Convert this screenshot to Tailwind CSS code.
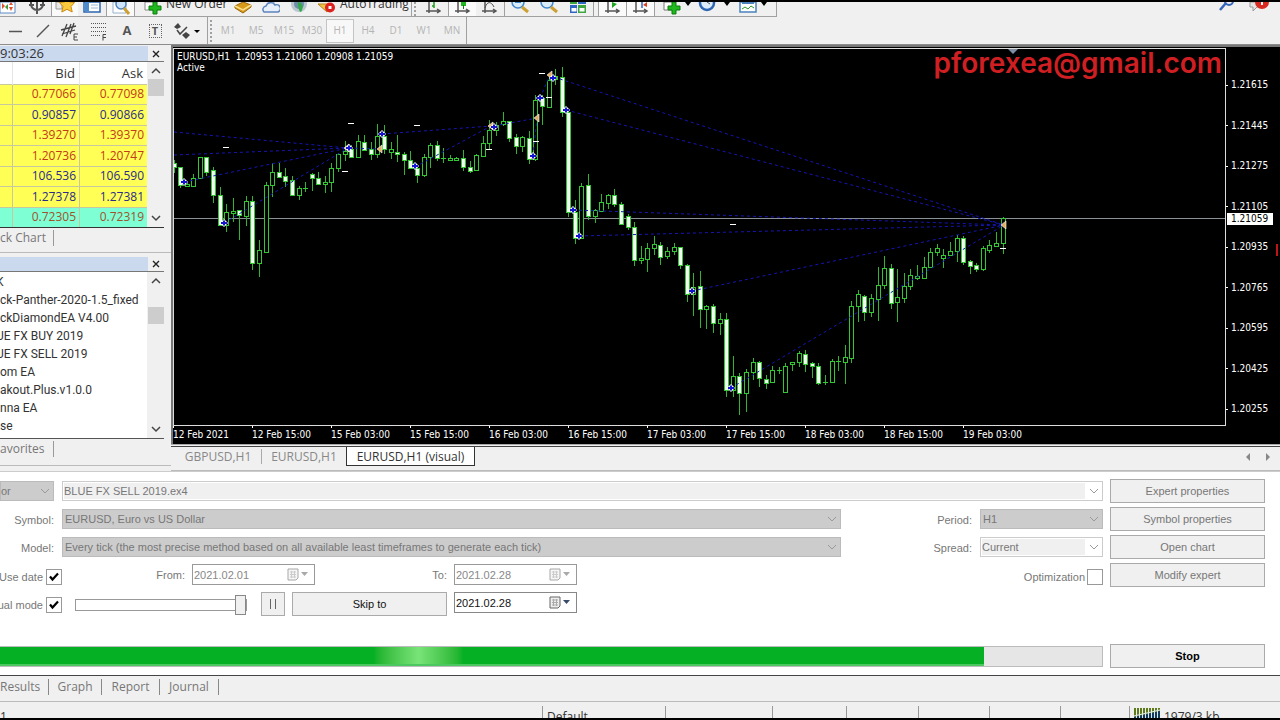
<!DOCTYPE html>
<html lang="en">

<head>
    <meta charset="UTF-8" />
    <title>EURUSD,H1 (visual)</title>
    <meta name="viewport" content="width=device-width, initial-scale=1.0" />
    <script src="https://cdn.jsdelivr.net/npm/@tailwindcss/browser@4"></script>
</head>

<body class="min-h-screen flex flex-col bg-[#f0f0f0] border-y-2 border-black font-['Open_Sans','Noto_Sans',sans-serif] text-xs text-[#333] overflow-x-hidden">

    <!-- Standard toolbar -->
    <div class="flex justify-between h-[15px] overflow-hidden">
        <div class="flex items-center h-[15px] border-b border-r border-[#a0a0a0]">
            <span class="w-[22px]">
                <svg width="16" height="15" viewBox="0 0 16 15"><path d="M0 0h15v11H0z" fill="#fff" stroke="#5b8ac4" /><path d="M2 1l3 3-3 3zM9 3h4l-2-3zM9 5h4l-2 4z" fill="#e4502b" /><path d="M5 5l3-3v6z" fill="#3a9d3a" /></svg>
            </span>
            <span class="w-[29px] flex justify-center">
                <svg width="18" height="15" viewBox="0 0 18 15" fill="none" stroke="#555" stroke-width="2"><path d="M3 0v2a6 6 0 0 0 12 0V0M9 0v12M1 3h5M12 3h5" /></svg>
            </span>
            <span class="w-[27px] h-full flex justify-center items-center bg-[#fafafa] border-l border-[#a0a0a0]">
                <svg width="20" height="15" viewBox="0 0 20 15"><path d="M1 0h6v7H1z" fill="#e8e8e8" stroke="#999" /><path d="M12 -5l2.500 5 5 .500-3.500 4 1.200 5.500-5.200-2.700-5.200 2.700 1.200-5.500-3.500-4 5-.500z" fill="#fbc93d" stroke="#c98a12" /></svg>
            </span>
            <span class="w-[28px] flex justify-center">
                <svg width="18" height="15" viewBox="0 0 18 15"><path d="M1 0h16v10H1z" fill="#fff" stroke="#2a66b0" stroke-width="1.500" /><path d="M2 0h4v9H2z" fill="#4b8bd0" /><path d="M8 3h7M8 6h7" stroke="#9fb9d6" /></svg>
            </span>
            <span class="w-[29px] h-full flex justify-center items-center bg-[#fafafa] border-x border-[#a0a0a0]">
                <svg width="20" height="15" viewBox="0 0 20 15"><path d="M2 0h13v11H2z" fill="#fff" stroke="#9ab0cc" /><circle cx="10" cy="2" r="5" fill="#cfe4f8" stroke="#4b82bd" stroke-width="1.500" /><path d="M13 6l5 6" stroke="#cba035" stroke-width="3" /></svg>
            </span>
            <span class="w-[31px] flex justify-end pr-1">
                <svg width="18" height="15" viewBox="0 0 18 15"><path d="M1 0h11v8H1z" fill="#fff" stroke="#888" /><path d="M9 0h4v4h4v4h-4v4H9V8H5V4h4z" fill="#1fb81f" stroke="#0d7d0d" /></svg>
            </span>
            <button class="w-[62px] text-left leading-4 -mt-[10px] whitespace-nowrap">New Order</button>
            <span class="w-[29px] flex justify-center">
                <svg width="18" height="15" viewBox="0 0 18 15"><path d="M1 4l8-4 8 3v2l-8 6-8-5z" fill="#d99a1c" stroke="#9a6508" /><path d="M1 4l8 4 8-5" fill="none" stroke="#fbe08a" stroke-width="1.500" /></svg>
            </span>
            <span class="w-[28px] flex justify-center">
                <svg width="18" height="15" viewBox="0 0 18 15"><circle cx="9" cy="0" r="3" fill="#fff" stroke="#6a93c8" /><path d="M2 10a3.500 3.500 0 0 1 2-6 5 5 0 0 1 9-1 3.500 3.500 0 0 1 3 7z" fill="#e6effa" stroke="#5b83ba" stroke-width="1.500" /></svg>
            </span>
            <span class="w-[28px] flex justify-center">
                <svg width="18" height="15" viewBox="0 0 18 15"><circle cx="9" cy="2" r="8" fill="#b9c5cf" /><circle cx="9" cy="2" r="5" fill="#6d8fa8" /><path d="M8 0c5 1 6 5 3 10-2 0-3-5-3-10z" fill="#35a94a" /></svg>
            </span>
            <span class="w-[27px] flex justify-center">
                <svg width="18" height="15" viewBox="0 0 18 15"><path d="M0 2h14l-5 8z" fill="#f3c242" stroke="#b5841a" /><circle cx="12" cy="5.500" r="5" fill="#dd2020" /><path d="M10.500 4h3v3h-3z" fill="#fff" /></svg>
            </span>
            <button class="w-[71px] text-left leading-4 -mt-[10px] whitespace-nowrap">AutoTrading</button>
            <span class="w-[7px] h-full border-l border-[#a0a0a0] flex justify-center"><i class="h-full border-l-2 border-dotted border-[#a0a0a0]"></i></span>
            <span class="w-[30px] flex justify-center">
                <svg width="16" height="15" viewBox="0 0 16 15" fill="none"><path d="M4 0v11M1 9h13M12 7l3 2-3 2" stroke="#555" stroke-width="1.500" /><path d="M9 0v6M9 4h-2" stroke="#1a9c1a" stroke-width="1.500" /></svg>
            </span>
            <span class="w-[28px] h-full flex justify-center items-center bg-[#fafafa] border-l border-[#a0a0a0]">
                <svg width="16" height="15" viewBox="0 0 16 15" fill="none"><path d="M3 0v11M0 9h13M11 7l3 2-3 2" stroke="#555" stroke-width="1.500" /><path d="M6 0h5v4H6z" fill="#1fb81f" /><path d="M8.500 3v4" stroke="#0d7d0d" /></svg>
            </span>
            <span class="w-[29px] h-full flex justify-center items-center border-r border-[#a0a0a0]">
                <svg width="16" height="15" viewBox="0 0 16 15" fill="none"><path d="M3 0v11M0 9h13M11 7l3 2-3 2" stroke="#555" stroke-width="1.500" /><path d="M3 6c2-7 6-7 9-1" stroke="#555" /></svg>
            </span>
            <span class="w-[30px] flex justify-center">
                <svg width="18" height="15" viewBox="0 0 18 15"><circle cx="7" cy="0" r="6" fill="#d8ecfb" stroke="#3f86cc" stroke-width="1.500" /><path d="M4 0h6" stroke="#3f86cc" stroke-width="2" /><path d="M11 5l6 5" stroke="#cba035" stroke-width="3" /></svg>
            </span>
            <span class="w-[28px] flex justify-center">
                <svg width="18" height="15" viewBox="0 0 18 15"><circle cx="7" cy="0" r="6" fill="#d8ecfb" stroke="#3f86cc" stroke-width="1.500" /><path d="M11 5l6 5" stroke="#cba035" stroke-width="3" /></svg>
            </span>
            <span class="w-[31px] h-full flex justify-center items-center border-r border-[#a0a0a0]">
                <svg width="18" height="15" viewBox="0 0 18 15"><path d="M1 0h7v2H1zM9 3h8v8H9z" fill="#3fa53f" /><path d="M9 0h8v2H9zM1 3h7v8H1z" fill="#2f66c4" /><path d="M2.500 6h5v3.500h-5zM10.500 6h5v3.500h-5z" fill="#fff" /></svg>
            </span>
            <span class="ml-1 w-[28px] h-full flex justify-center items-center bg-[#fafafa] border-l border-[#a0a0a0]">
                <svg width="16" height="15" viewBox="0 0 16 15" fill="none"><path d="M3 0v11M0 9h13M11 7l3 2-3 2" stroke="#555" stroke-width="1.500" /><path d="M7 0v6l5-4z" fill="#1fa51f" /></svg>
            </span>
            <span class="w-[29px] h-full flex justify-center items-center bg-[#fafafa] border-x border-[#a0a0a0]">
                <svg width="16" height="15" viewBox="0 0 16 15" fill="none"><path d="M3 0v11M0 9h13M11 7l3 2-3 2" stroke="#555" stroke-width="1.500" /><path d="M9 0v6" stroke="#2f66c4" stroke-width="1.500" /><path d="M10 3l4-3v5z" fill="#d8401f" /></svg>
            </span>
            <span class="w-[36px] flex items-start justify-end gap-1">
                <svg width="18" height="15" viewBox="0 0 18 15"><path d="M1 0h11v8H1z" fill="#fff" stroke="#777" /><path d="M9 0h4v4h4v4h-4v4H9V8H5V4h4z" fill="#1fb81f" stroke="#0d7d0d" /></svg>
                <svg width="6" height="4" viewBox="0 0 6 4"><path d="M0 0h6L3 4z" /></svg>
            </span>
            <span class="w-[39px] flex items-start justify-end gap-2">
                <svg width="18" height="15" viewBox="0 0 18 15"><circle cx="9" cy="1" r="7" fill="#dcecfb" stroke="#2f66b4" stroke-width="2.500" /><path d="M9 0l3 2" stroke="#555" /></svg>
                <svg width="6" height="4" viewBox="0 0 6 4"><path d="M0 0h6L3 4z" /></svg>
            </span>
            <span class="w-[46px] flex items-start justify-center gap-1">
                <svg width="18" height="15" viewBox="0 0 18 15"><path d="M1 0h16v10H1z" fill="#fff" stroke="#4b82bd" stroke-width="1.500" /><path d="M3 1h12" stroke="#4b82bd" stroke-width="2" /><path d="M3 7l3-2 3 2 3-3 3 2" fill="none" stroke="#2a9c2a" /></svg>
                <svg width="6" height="4" viewBox="0 0 6 4"><path d="M0 0h6L3 4z" /></svg>
            </span>
        </div>
        <div class="flex gap-3 pr-2">
            <svg width="18" height="15" viewBox="0 0 18 15"><path d="M2 8l6-7" stroke="#3465b8" stroke-width="2.500" /><circle cx="11" cy="-1" r="4" fill="none" stroke="#3465b8" stroke-width="2" /></svg>
            <svg width="24" height="15" viewBox="0 0 24 15"><path d="M2 0h13v5H9l-4 4V5H2z" fill="#e4e4e4" stroke="#999" /><circle cx="14" cy="0" r="7" fill="#d82a20" /><path d="M14 -2v5" stroke="#fff" stroke-width="2" /></svg>
        </div>
    </div>

    <!-- Line studies and periods -->
    <div class="flex h-[28px] border-b border-[#8c8c8c]">
        <div class="flex items-center border-r border-[#a0a0a0] w-[208px]">
            <svg class="ml-px" width="28" height="26" viewBox="0 0 28 26"><path d="M8 13.500h13" stroke="#555" stroke-width="1.500" /></svg>
            <svg width="28" height="26" viewBox="0 0 28 26"><path d="M8 19l12-12" stroke="#555" stroke-width="1.500" /></svg>
            <svg width="28" height="26" viewBox="0 0 28 26"><path d="M5 18l5-12M9 19l5-13M13 16l4-11M4 12l15-4M5 16l13-4" stroke="#444" stroke-width="1.300" /><path d="M21 16h-4v6h4M17 19h3" fill="none" stroke="#444" /></svg>
            <svg width="28" height="26" viewBox="0 0 28 26"><path d="M6 5.500h15M6 9.500h15M6 13.500h15M6 17.500h10" stroke="#555" stroke-dasharray="1 1" /><path d="M21 16.500h-3v6M18 19.500h3" fill="none" stroke="#444" /></svg>
            <span class="w-[28px] text-center font-bold text-[13px] text-[#555]">A</span>
            <span class="w-[28px] flex justify-center"><span class="w-[13px] h-[14px] border border-dotted border-[#666] text-center font-bold text-[11px] leading-3 text-[#555]">T</span></span>
            <svg width="36" height="26" viewBox="0 0 36 26"><path d="M5 9l4-4 3 4-4 2zM13 17l4-3 4 3-4 4z" fill="#444" /><path d="M8 12l3 4 7-7" fill="none" stroke="#444" stroke-width="1.500" /><path d="M25 12h6l-3 3z" fill="#000" /></svg>
        </div>
        <div class="flex items-center border-r border-[#a0a0a0] text-[10px] text-[#b4b4b4]">
            <i class="mx-[2px] h-[22px] border-l-2 border-dotted border-[#a0a0a0]"></i>
            <button class="w-[28px]">M1</button>
            <button class="w-[28px]">M5</button>
            <button class="w-[28px]">M15</button>
            <button class="w-[28px]">M30</button>
            <button class="w-[28px] h-6 bg-[#f8f8f8] border border-[#c4c4c4]">H1</button>
            <button class="w-[28px]">H4</button>
            <button class="w-[28px]">D1</button>
            <button class="w-[28px]">W1</button>
            <button class="w-[28px]">MN</button>
        </div>
    </div>

    <main class="flex flex-1 min-h-[421px]">

        <!-- Market watch and navigator -->
        <aside class="w-[171px] shrink-0 flex flex-col">
            <section class="pr-[7px]">
                <header class="flex items-center justify-between h-4 border-b border-[#777] mt-px">
                    <span class="flex-1 h-full bg-[#cbd9ee] text-[13px] leading-[15px]">9:03:26</span>
                    <button class="w-4 pl-1" aria-label="Close market watch"><svg width="8" height="8" viewBox="0 0 8 8"><path d="M1 1l6 6M7 1L1 7" stroke="#222" stroke-width="1.400" /></svg></button>
                </header>
                <div class="flex border-b border-[#333]">
                    <table class="flex-1 table-fixed w-full h-[165px] bg-white text-right border-collapse leading-4">
                        <thead>
                            <tr class="h-[22px] text-[13px]">
                                <th class="w-3 border-r border-[#e4e4e4]"></th>
                                <th class="font-normal pr-1 border-r border-[#e4e4e4]">Bid</th>
                                <th class="font-normal pr-1">Ask</th>
                            </tr>
                        </thead>
                        <tbody id="quotes"></tbody>
                    </table>
                    <div class="w-[17px] flex flex-col items-center bg-[#f0f0f0]">
                        <svg width="16" height="17" viewBox="0 0 16 17"><path d="M4 11l4-4 4 4" fill="none" stroke="#444" stroke-width="1.500" /></svg>
                        <span class="w-4 h-[17px] bg-[#cdcdcd]"></span>
                        <svg class="mt-auto" width="16" height="17" viewBox="0 0 16 17"><path d="M4 6l4 4 4-4" fill="none" stroke="#444" stroke-width="1.500" /></svg>
                    </div>
                </div>
                <nav class="flex items-center h-5 text-[#777]">
                    <a href="#" class="w-[54px] border-r border-[#999] leading-4 whitespace-nowrap">ck Chart</a>
                </nav>
            </section>

            <section class="flex-1 flex flex-col mt-1 mb-[5px] border-y border-[#bbb] pr-[7px]">
                <header class="flex items-center justify-between h-[15px] border-b border-[#777] mt-1">
                    <span class="flex-1 h-full bg-[#cbd9ee]"></span>
                    <button class="w-4 pl-1" aria-label="Close navigator"><svg width="8" height="8" viewBox="0 0 8 8"><path d="M1 1l6 6M7 1L1 7" stroke="#222" stroke-width="1.400" /></svg></button>
                </header>
                <div class="flex flex-1 border-b border-[#555] bg-white">
                    <ul class="flex-1 leading-[18px] pt-px overflow-hidden whitespace-nowrap font-['Roboto',sans-serif]">
                        <li class="-ml-1">K</li>
                        <li>ck-Panther-2020-1.5_fixed</li>
                        <li>ckDiamondEA V4.00</li>
                        <li class="-ml-1">UE FX BUY 2019</li>
                        <li class="-ml-1">UE FX SELL 2019</li>
                        <li>om EA</li>
                        <li>akout.Plus.v1.0.0</li>
                        <li>nna EA</li>
                        <li>se</li>
                    </ul>
                    <div class="w-[17px] flex flex-col items-center bg-[#f0f0f0]">
                        <svg width="16" height="17" viewBox="0 0 16 17"><path d="M4 11l4-4 4 4" fill="none" stroke="#444" stroke-width="1.500" /></svg>
                        <span class="mt-[18px] w-4 h-[17px] bg-[#cdcdcd]"></span>
                        <svg class="mt-auto" width="16" height="17" viewBox="0 0 16 17"><path d="M4 6l4 4 4-4" fill="none" stroke="#444" stroke-width="1.500" /></svg>
                    </div>
                </div>
                <nav class="flex items-start h-[26px] pt-[2px] text-[#777]">
                    <a href="#" class="w-[54px] border-r border-[#999] leading-4 whitespace-nowrap">avorites</a>
                </nav>
            </section>
        </aside>

        <div class="flex-1 flex flex-col min-w-0">
            <!-- Chart window -->
            <div class="flex-1 flex bg-black text-white text-[10px] border-t-2 border-l-2 border-[#777] font-['DejaVu_Sans_Condensed','DejaVu_Sans',sans-serif] overflow-hidden">
                <div class="flex-1 flex flex-col min-w-0 pt-px">
                    <div class="relative flex-1 border border-[#ddd] overflow-hidden">
                        <svg id="plot" class="absolute inset-0 w-full h-full"></svg>
                        <div class="relative pl-[3px] pt-[2px] leading-[11px] whitespace-pre">EURUSD,H1  1.20953 1.21060 1.20908 1.21059
Active</div>
                        <div class="absolute top-[-6px] right-[3px] text-[28px] leading-10 font-semibold text-[#d01f23] font-['Inter',sans-serif]">pforexea@gmail.com</div>
                    </div>
                    <div id="times" class="flex h-[18px] leading-[18px] whitespace-nowrap"></div>
                </div>
                <div class="w-[54px] relative pb-[30px] pt-[33px]">
                    <ul id="prices" class="flex flex-col justify-between h-full leading-[10px]"></ul>
                    <span class="absolute top-[166px] left-[1px] w-[46px] pl-1 h-3 leading-3 bg-white text-black">1.21059</span>
                    <i class="absolute top-[197px] right-[2px] w-[2px] h-3 bg-[#c01515]"></i>
                </div>
            </div>

            <!-- Chart tabs -->
            <nav class="flex items-start h-[27px] pt-px border-t border-[#aaa] border-b border-b-[#bbb] text-[#888]">
                <div class="flex w-full h-5 border-t border-[#444] text-[12px] leading-[19px]">
                    <a href="#" class="w-[91px] text-center border-r border-[#aaa] pl-1 my-[2px] leading-4">GBPUSD,H1</a>
                    <a href="#" class="w-[84px] text-center my-[2px] leading-4">EURUSD,H1</a>
                    <a href="#" class="w-[129px] text-center bg-white text-[#333] border border-t-0 border-[#333]">EURUSD,H1 (visual)</a>
                    <span class="ml-auto flex items-center gap-4 pr-[10px]">
                        <svg width="4" height="8" viewBox="0 0 4 8"><path d="M4 0v8L0 4z" fill="#888" /></svg>
                        <svg width="4" height="8" viewBox="0 0 4 8"><path d="M0 0v8l4-4z" fill="#888" /></svg>
                    </span>
                </div>
            </nav>
        </div>
    </main>

    <!-- Strategy tester -->
    <form class="flex gap-[7px] bg-white border-t border-[#ccc] border-b border-b-[#444] pt-[7px] pr-[15px] pb-[7px] h-[205px] font-['Liberation_Sans',sans-serif] text-[11px] text-[#777]">
        <div class="flex-1 flex flex-col min-w-0">
            <div class="flex gap-2 h-7 items-start pt-[2px]">
                <span class="relative w-[54px]">
                    <select disabled aria-label="Program type" class="w-full h-5 appearance-none bg-[#ccc] border border-[#bbb] opacity-100 text-[#777]"><option>or</option></select>
                    <svg class="absolute right-1 top-[6px]" width="10" height="8" viewBox="0 0 10 8"><path d="M1 2l4 4 4-4" fill="none" stroke="#999" /></svg>
                </span>
                <span class="relative flex-1">
                    <select disabled aria-label="Expert advisor" class="w-full h-5 appearance-none bg-[#f0f0f0] border-2 border-r-[18px] border-white outline outline-1 -outline-offset-1 outline-[#ccc] opacity-100 text-[#777]"><option>BLUE FX SELL 2019.ex4</option></select>
                    <svg class="absolute right-1 top-[6px]" width="10" height="8" viewBox="0 0 10 8"><path d="M1 2l4 4 4-4" fill="none" stroke="#999" /></svg>
                </span>
            </div>
            <div class="flex h-7 items-start pt-[2px]">
                <label for="symbol" class="w-[54px] mr-2 text-right leading-[22px]">Symbol:</label>
                <span class="relative flex-1">
                    <select id="symbol" disabled class="w-full h-5 pl-[2px] appearance-none bg-[#ccc] border border-[#bbb] opacity-100 text-[#777]"><option>EURUSD, Euro vs US Dollar</option></select>
                    <svg class="absolute right-1 top-[6px]" width="10" height="8" viewBox="0 0 10 8"><path d="M1 2l4 4 4-4" fill="none" stroke="#999" /></svg>
                </span>
                <label for="period" class="w-[131px] mr-2 text-right leading-[22px]">Period:</label>
                <span class="relative w-[123px]">
                    <select id="period" disabled class="w-full h-5 pl-[2px] appearance-none bg-[#ccc] border border-[#bbb] opacity-100 text-[#777]"><option>H1</option></select>
                    <svg class="absolute right-1 top-[6px]" width="10" height="8" viewBox="0 0 10 8"><path d="M1 2l4 4 4-4" fill="none" stroke="#999" /></svg>
                </span>
            </div>
            <div class="flex h-7 items-start pt-[2px]">
                <label for="model" class="w-[54px] mr-2 text-right leading-[22px]">Model:</label>
                <span class="relative flex-1">
                    <select id="model" disabled class="w-full h-5 pl-[2px] appearance-none bg-[#ccc] border border-[#bbb] opacity-100 text-[#777]"><option>Every tick (the most precise method based on all available least timeframes to generate each tick)</option></select>
                    <svg class="absolute right-1 top-[6px]" width="10" height="8" viewBox="0 0 10 8"><path d="M1 2l4 4 4-4" fill="none" stroke="#999" /></svg>
                </span>
                <label for="spread" class="w-[131px] mr-2 text-right leading-[22px]">Spread:</label>
                <span class="relative w-[123px]">
                    <select id="spread" disabled class="w-full h-5 appearance-none bg-[#f0f0f0] border-2 border-r-[18px] border-white outline outline-1 -outline-offset-1 outline-[#ccc] opacity-100 text-[#777]"><option>Current</option></select>
                    <svg class="absolute right-1 top-[6px]" width="10" height="8" viewBox="0 0 10 8"><path d="M1 2l4 4 4-4" fill="none" stroke="#999" /></svg>
                </span>
            </div>
            <div class="flex h-7 items-start pt-px">
                <label class="w-[62px] flex items-center justify-end gap-[3px] pt-[5px] whitespace-nowrap">
                    Use date
                    <span class="relative size-4">
                        <input type="checkbox" checked class="peer block size-4 appearance-none border border-[#999] bg-white" />
                        <svg class="absolute inset-0 hidden peer-checked:block" width="16" height="16" viewBox="0 0 16 16"><path d="M4 7.500l2.500 3L12 4.500" fill="none" stroke="#000" stroke-width="2.200" /></svg>
                    </span>
                </label>
                <label for="from" class="w-[123px] mr-[7px] text-right leading-[22px]">From:</label>
                <span class="relative w-[123px]">
                    <input id="from" type="text" disabled value="2021.02.01" class="block w-full h-[21px] px-px border border-[#999] bg-white text-[#888]" />
                    <svg class="absolute right-1 top-1 opacity-50" width="24" height="14" viewBox="0 0 24 14"><path d="M1 1h10v9l-2 2H1z" fill="#eee" stroke="#555" /><path d="M3 4h6M3 6.500h6M3 9h6M4.500 3v7M7.500 3v7" stroke="#999" /><path d="M14 4h7l-3.500 4z" fill="#555" /></svg>
                </span>
                <label for="to" class="w-[132px] mr-[7px] text-right leading-[22px]">To:</label>
                <span class="relative w-[123px]">
                    <input id="to" type="text" disabled value="2021.02.28" class="block w-full h-[21px] px-px border border-[#999] bg-white text-[#888]" />
                    <svg class="absolute right-1 top-1 opacity-50" width="24" height="14" viewBox="0 0 24 14"><path d="M1 1h10v9l-2 2H1z" fill="#eee" stroke="#555" /><path d="M3 4h6M3 6.500h6M3 9h6M4.500 3v7M7.500 3v7" stroke="#999" /><path d="M14 4h7l-3.500 4z" fill="#555" /></svg>
                </span>
                <label class="ml-auto flex items-center gap-[2px] pt-[5px]">
                    Optimization
                    <input type="checkbox" class="block size-4 appearance-none border border-[#999] bg-white" />
                </label>
            </div>
            <div class="flex h-7 items-start pt-px">
                <label class="w-[62px] flex items-center justify-end gap-[3px] pt-[5px] whitespace-nowrap">
                    ual mode
                    <span class="relative size-4">
                        <input type="checkbox" checked class="peer block size-4 appearance-none border border-[#999] bg-white" />
                        <svg class="absolute inset-0 hidden peer-checked:block" width="16" height="16" viewBox="0 0 16 16"><path d="M4 7.500l2.500 3L12 4.500" fill="none" stroke="#000" stroke-width="2.200" /></svg>
                    </span>
                </label>
                <input type="range" value="100" aria-label="Speed" class="ml-[13px] mt-[3px] w-[172px] h-5 appearance-none bg-transparent [&::-webkit-slider-runnable-track]:h-3 [&::-webkit-slider-runnable-track]:border [&::-webkit-slider-runnable-track]:border-[#999] [&::-webkit-slider-thumb]:appearance-none [&::-webkit-slider-thumb]:w-[11px] [&::-webkit-slider-thumb]:h-5 [&::-webkit-slider-thumb]:-mt-[5px] [&::-webkit-slider-thumb]:bg-[#f0f0f0] [&::-webkit-slider-thumb]:border [&::-webkit-slider-thumb]:border-[#888]" />
                <button type="button" aria-label="Pause" class="ml-[14px] w-6 h-6 flex items-center justify-center gap-1 bg-[#f0f0f0] border border-[#aaa]">
                    <i class="w-px h-[10px] bg-[#666]"></i><i class="w-px h-[10px] bg-[#666]"></i>
                </button>
                <button type="button" class="ml-[7px] w-[155px] h-6 bg-[#f0f0f0] border border-[#aaa] text-[#111]">Skip to</button>
                <span class="relative w-[123px] ml-[7px]">
                    <input type="text" aria-label="Skip to date" value="2021.02.28" class="block w-full h-[21px] px-px border border-[#888] bg-white text-[#111]" />
                    <svg class="absolute right-1 top-1" width="24" height="14" viewBox="0 0 24 14"><path d="M1 1h10v9l-2 2H1z" fill="#eee" stroke="#666" /><path d="M3 4h6M3 6.500h6M3 9h6M4.500 3v7M7.500 3v7" stroke="#aaa" /><path d="M14 4h7l-3.500 4z" fill="#3a4a6a" /></svg>
                </span>
            </div>
            <div role="progressbar" aria-label="Testing" aria-valuenow="89" class="mt-auto mb-px h-[21px] bg-[#e6e6e6] border border-l-0 border-[#bcbcbc]">
                <div class="relative h-full bg-[#06b025] border-b-2 border-[#4cc860]" style="width: 89.3%">
                    <div class="absolute inset-y-0 left-[38%] w-[9%] bg-linear-to-r from-[#06b025] via-[#78e478] to-[#06b025]"></div>
                </div>
            </div>
        </div>
        <div class="w-[155px] flex flex-col gap-1">
            <button type="button" class="h-6 bg-[#f0f0f0] border border-[#aaa]">Expert properties</button>
            <button type="button" class="h-6 bg-[#f0f0f0] border border-[#aaa]">Symbol properties</button>
            <button type="button" class="h-6 bg-[#f0f0f0] border border-[#aaa]">Open chart</button>
            <button type="button" class="h-6 bg-[#f0f0f0] border border-[#aaa]">Modify expert</button>
            <button type="button" class="mt-auto h-6 bg-[#f0f0f0] border border-[#aaa] font-bold text-black">Stop</button>
        </div>
    </form>

    <nav class="flex items-center h-[26px] pb-1 border-b border-[#bbb] text-[#777] leading-4">
        <a href="#" class="w-[49px] border-r border-[#888]">Results</a>
        <a href="#" class="w-[53px] border-r border-[#888] text-center">Graph</a>
        <a href="#" class="w-[58px] border-r border-[#888] text-center">Report</a>
        <a href="#" class="w-[59px] border-r border-[#888] text-center">Journal</a>
    </nav>

    <!-- Status bar -->
    <footer class="flex h-4 overflow-hidden pt-1 leading-[22px] text-[12px]">
        <span class="flex-1 border-r border-[#999]">1</span>
        <span class="w-[123px] border-r border-[#999] pl-1">Default</span>
        <span class="w-[107px] border-r border-[#999]"></span>
        <span class="w-[74px] border-r border-[#999]"></span>
        <span class="w-[72px] border-r border-[#999]"></span>
        <span class="w-[71px] border-r border-[#999]"></span>
        <span class="w-[71px] border-r border-[#999]"></span>
        <span class="w-[69px] border-r border-[#999]"></span>
        <span class="w-[150px] flex gap-1 pl-1">
            <svg width="26" height="14" viewBox="0 0 26 14"><path d="M0 8h26" stroke="#5c7a1c" stroke-width="12" stroke-dasharray="2 1" /><path d="M0 11L26 5v9H0z" fill="#123a5c" /><path d="M0 10L26 4M2.500 10v4M5.500 9v5M8.500 9v5M11.500 8v6M14.500 7v7M17.500 7v7M20.500 6v8M23.500 5v9" stroke="#dfe8ee" /></svg>
            1979/3 kb
        </span>
    </footer>

    <script>
        // [bid, ask, text colour, row colour]
        const up = 'text-[#2b2b8c]', down = 'text-[#c23a1c]';
        const quotes = [
            ['0.77066', '0.77098', down, 'bg-[#ffff55]'],
            ['0.90857', '0.90866', up, 'bg-[#ffff55]'],
            ['1.39270', '1.39370', down, 'bg-[#ffff55]'],
            ['1.20736', '1.20747', down, 'bg-[#ffff55]'],
            ['106.536', '106.590', up, 'bg-[#ffff55]'],
            ['1.27378', '1.27381', up, 'bg-[#ffff55]'],
            ['0.72305', '0.72319', 'text-[#a0522d]', 'bg-[#7fffd4]']
        ];
        document.getElementById('quotes').innerHTML = quotes.map(([bid, ask, color, row]) =>
            `<tr class="${row} ${color}"><td class="border-r border-t border-[#c8c8a0]"></td><td class="p-0 pr-[3px] border-r border-t border-[#c8c8a0]">${bid}</td><td class="p-0 pr-[3px] border-t border-[#c8c8a0]">${ask}</td></tr>`
        ).join('');

        const prices = ['1.21615', '1.21445', '1.21275', '1.21105', '1.20935', '1.20765', '1.20595', '1.20425', '1.20255'];
        document.getElementById('prices').innerHTML = prices.map(p =>
            `<li class="flex items-center gap-[3px]"><i class="w-[2px] h-px bg-white"></i>${p}</li>`
        ).join('');

        const times = ['12 Feb 2021', '12 Feb 15:00', '15 Feb 03:00', '15 Feb 15:00', '16 Feb 03:00', '16 Feb 15:00', '17 Feb 03:00', '17 Feb 15:00', '18 Feb 03:00', '18 Feb 15:00', '19 Feb 03:00'];
        document.getElementById('times').innerHTML = times.map(t =>
            `<span class="relative w-[79px] shrink-0"><i class="absolute left-0 top-0 w-px h-[2px] bg-white"></i>${t}</span>`
        ).join('');

        // high, body top, body bottom, low, filled
        const candles = [
            [160,163,167,173,1],[167,167,185,188,1],[183,184,186,187,0],[174,178,186,186,0],[157,157,178,179,0],[157,157,172,176,1],
            [167,170,195,203,1],[187,195,225,226,1],[204,212,225,232,0],[198,211,213,222,0],[210,210,215,240,1],[196,201,216,226,0],
            [196,201,263,270,1],[240,250,263,277,0],[182,185,252,252,0],[163,172,185,197,0],[163,172,177,177,1],[168,176,181,187,1],
            [176,180,195,195,1],[186,188,195,200,0],[182,188,189,192,0],[173,174,178,191,1],[172,178,184,184,1],[176,182,184,193,0],
            [163,168,182,192,0],[153,154,168,172,0],[141,151,154,161,0],[145,149,157,158,1],[135,141,157,157,0],[135,142,150,150,1],
            [142,149,154,160,1],[124,136,154,158,0],[125,136,149,154,1],[142,149,152,159,0],[135,152,154,162,1],[152,154,160,175,1],
            [151,160,168,168,1],[167,168,175,183,1],[154,157,175,177,0],[143,145,157,168,0],[141,145,158,161,1],[148,158,159,163,0],
            [155,158,160,161,0],[157,158,160,161,0],[150,158,167,171,1],[161,167,171,173,1],[154,155,170,171,0],[136,143,156,157,0],
            [120,130,143,149,0],[122,125,130,136,0],[112,121,124,126,0],[121,121,138,142,1],[134,137,146,154,1],[136,137,146,152,0],
            [131,138,159,164,1],[95,100,159,161,0],[95,98,106,125,1],[75,80,107,107,0],[69,76,79,85,0],[67,77,112,117,1],
            [110,112,212,217,1],[200,212,238,244,1],[183,186,238,239,0],[174,185,216,220,1],[209,210,216,223,0],[194,202,211,212,0],
            [194,195,203,209,0],[189,195,204,207,1],[202,204,224,225,1],[214,216,227,230,1],[222,227,260,266,1],[246,258,260,264,0],
            [243,248,259,272,0],[236,244,248,255,0],[242,245,257,265,1],[247,251,256,259,0],[243,247,251,255,0],[247,247,265,269,1],
            [264,265,294,302,1],[273,287,294,316,0],[271,286,309,328,1],[305,306,309,329,0],[304,306,323,333,1],[313,319,323,335,0],
            [313,319,390,397,1],[356,376,390,397,0],[373,376,393,415,1],[369,372,393,412,0],[358,362,372,380,0],[361,362,378,387,1],
            [375,379,383,389,1],[366,370,382,383,0],[367,370,371,374,0],[363,366,392,392,0],[362,362,364,371,0],[351,353,362,367,0],
            [350,354,364,372,1],[362,363,366,378,1],[363,366,383,385,1],[375,382,383,385,0],[359,361,382,382,0],[356,361,362,371,0],
            [345,357,362,384,0],[301,306,358,363,0],[290,294,306,322,0],[295,296,312,321,1],[294,298,312,317,0],[267,285,299,321,0],
            [256,268,285,289,0],[264,268,303,309,1],[269,297,302,322,0],[273,286,298,303,0],[269,275,286,290,0],[265,276,278,280,0],
            [257,267,278,279,0],[248,252,267,268,0],[244,248,252,256,0],[249,255,258,268,0],[242,251,255,256,0],[235,238,251,262,0],
            [236,238,262,265,1],[260,261,266,274,1],[263,265,269,272,1],[246,248,269,271,0],[240,245,250,253,0],[232,243,246,247,0],
            [217,218,243,254,0]
        ];
        // order open -> close
        const trades = [
            [174,132,348,148],[174,155,348,148],[184,182,348,148],[224,223,348,148],[349,148,379,149],[382,134,491,126],
            [415,167,491,126],[494,126,537,118],[533,156,537,118],[540,98,550,75],[554,77,1004,225],[566,110,1004,225],
            [573,210,1004,225],[579,236,1004,225],[692,291,1004,225],[731,388,1004,225]
        ];
        const stops = [[226,148],[351,124],[345,172],[417,126],[489,150],[542,74],[549,98],[536,142],[733,225],[1003,249]];
        const opens = [[184,182],[224,223],[349,148],[382,134],[415,166],[494,127],[533,156],[540,98],[553,78],[566,110],[573,210],[579,236],[692,291],[731,388]];
        const closes = [[347,148],[380,149],[491,126],[537,118],[550,75],[1004,225]];

        let out = '<g transform="translate(-174 -49)" shape-rendering="crispEdges">';
        out += '<path d="M174 218.5h4000" stroke="#8a9296" />';
        candles.forEach(([high, top, bottom, low, filled], i) => {
            const x = Math.round(173.5 + i * 6.58);
            out += `<path d="M${x + 0.5} ${high}V${low}" stroke="#32b432" />`;
            if (bottom - top < 2) {
                out += `<path d="M${x - 2} ${top + 0.5}h5" stroke="#32cd32" />`;
            } else {
                out += `<rect x="${x - 1.5}" y="${top + 0.5}" width="4" height="${bottom - top}" fill="${filled ? '#f0fff0' : '#000'}" stroke="#32c832" />`;
            }
        });
        out += '</g><g transform="translate(-174 -49)">';
        trades.forEach(([x1, y1, x2, y2]) => {
            out += `<path d="M${x1} ${y1}L${x2} ${y2}" stroke="#1515b4" stroke-dasharray="3 3" />`;
        });
        stops.forEach(([x, y]) => {
            out += `<path d="M${x - 3} ${y - 0.5}h6" stroke="#fff" />`;
        });
        closes.forEach(([x, y]) => {
            out += `<path d="M${x + 2} ${y - 4}v8l-5-4z" fill="#e0b060" stroke="#fff" stroke-width=".6" />`;
        });
        opens.forEach(([x, y]) => {
            out += `<path d="M${x - 4} ${y}l4-4 4 4-4 4z" fill="#fff" /><path d="M${x - 3} ${y}h6M${x} ${y - 2.5}v5" stroke="#1414d2" stroke-width="2" />`;
        });
        out += '<path d="M1008 49h10l-5 5z" fill="#8090a4" /></g>';
        document.getElementById('plot').innerHTML = out;
    </script>

</body>

</html>
